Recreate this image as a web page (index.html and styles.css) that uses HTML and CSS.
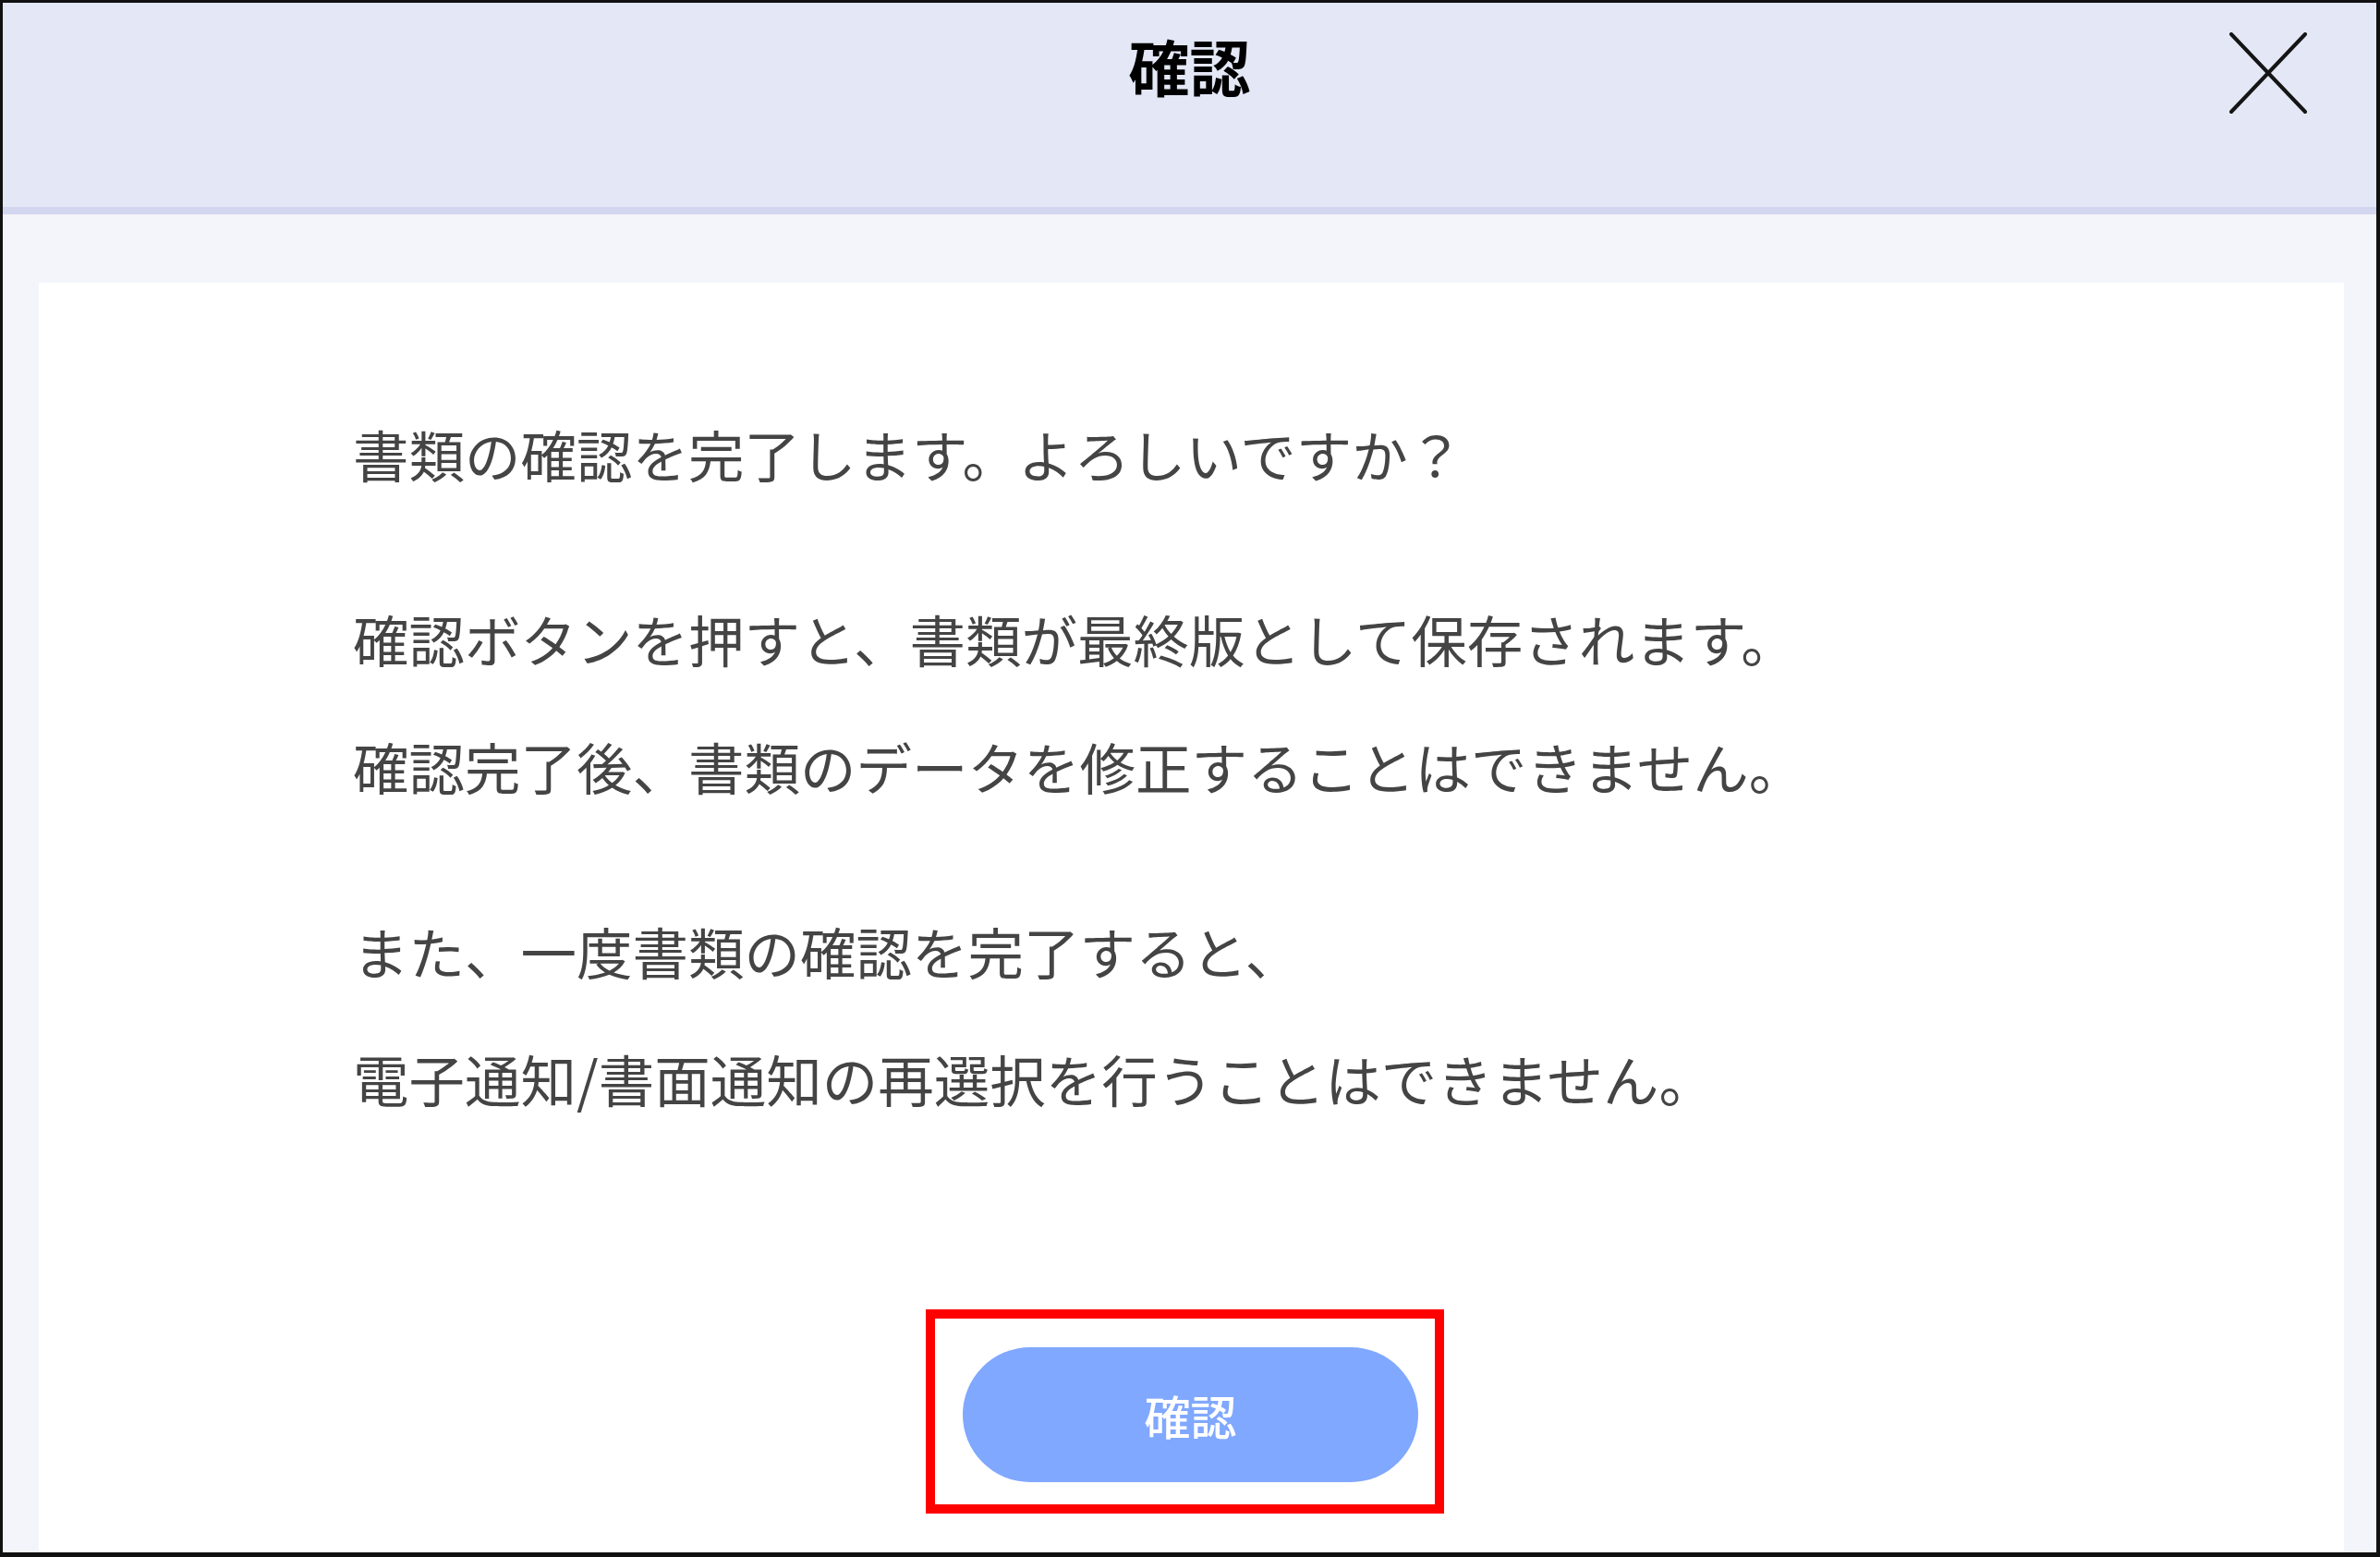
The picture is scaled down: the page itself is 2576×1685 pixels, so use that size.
FILE: index.html
```html
<!DOCTYPE html>
<html lang="ja">
<head>
<meta charset="utf-8">
<title>確認</title>
<link rel="stylesheet" href="styles.css">
</head>
<body>
<div class="frame">
  <header class="dialog-header">
    <div class="spacer"></div>
    <h1 class="dialog-title">確認</h1>
    <div class="close-wrap">
      <svg class="close-icon" width="84" height="88" viewBox="0 0 84 88" aria-label="閉じる">
        <line x1="2" y1="2" x2="82" y2="86" stroke="#151515" stroke-width="4" stroke-linecap="round"/>
        <line x1="82" y1="2" x2="2" y2="86" stroke="#151515" stroke-width="4" stroke-linecap="round"/>
      </svg>
    </div>
  </header>
  <main class="dialog-body">
    <section class="card">
      <div class="message">
        <p class="para">書類の確認を完了します。よろしいですか？</p>
        <p class="para">確認ボタンを押すと、書類が最終版として保存されます。<br>確認完了後、書類のデータを修正することはできません。</p>
        <p class="para">また、一度書類の確認を完了すると、<br>電子通知/書面通知の再選択を行うことはできません。</p>
      </div>
      <div class="actions">
        <div class="highlight">
          <button class="confirm-btn" type="button">確認</button>
        </div>
      </div>
    </section>
  </main>
</div>
</body>
</html>
```

FILE: styles.css
```css
* { box-sizing: border-box; }

html, body {
  margin: 0;
  padding: 0;
  background: #ffffff;
}

body {
  font-family: "Noto Sans CJK JP", "Noto Sans", sans-serif;
}

.frame {
  width: 2576px;
  height: 1685px;
  border-top: 3px solid #111;
  border-left: 3px solid #111;
  border-right: 4px solid #111;
  border-bottom: 5px solid #111;
  display: flex;
  flex-direction: column;
  background: #f4f5fa;
}

.dialog-header {
  height: 229px;
  flex: none;
  background: #e3e7f6;
  border-bottom: 8px solid #d3d6ef;
  display: grid;
  grid-template-columns: 1fr auto 1fr;
  align-items: start;
}

.dialog-title {
  margin: 33px 0 0;
  font-size: 66px;
  line-height: 68px;
  font-weight: 700;
  color: #000;
  letter-spacing: 0;
}

.close-wrap {
  display: flex;
  justify-content: flex-end;
  padding-right: 75px;
  padding-top: 32px;
}

.close-icon { display: block; }

.dialog-body {
  flex: 1;
  display: flex;
  padding: 74px 35px 0 39px;
}

.card {
  flex: 1;
  background: #ffffff;
  padding: 116px 0 0 340px;
  display: flex;
  flex-direction: column;
}

.message {
  color: #444444;
  font-size: 60.5px;
  line-height: 138px;
}

.para {
  margin: 0 0 62px;
  white-space: nowrap;
}

.para:last-child { margin-bottom: 0; }

.actions {
  margin-top: 181px;
  margin-left: -340px;
  display: flex;
  justify-content: center;
}

.highlight {
  border: 10px solid #ff0000;
  padding: 31px 18px 24px 30px;
  margin-right: 14px;
}

.confirm-btn {
  display: block;
  width: 493px;
  height: 146px;
  border: none;
  border-radius: 73px;
  background: #80a8fe;
  color: #ffffff;
  font-family: "Noto Sans CJK JP", sans-serif;
  font-size: 50px;
  font-weight: 500;
  padding: 0 0 0 0;
}
```
